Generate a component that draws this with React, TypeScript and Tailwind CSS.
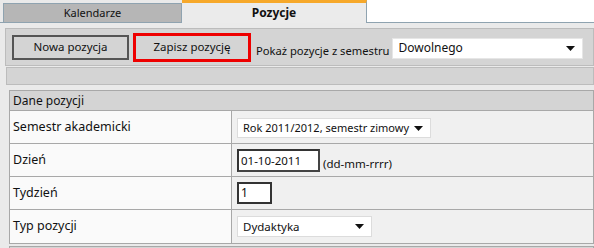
import React from "react";

function Caret() {
  return (
    <svg width="9" height="5" viewBox="0 0 9 5" className="shrink-0">
      <path d="M0 0h9L4.5 5z" fill="#111" />
    </svg>
  );
}

function Select({ value, className }: { value: string; className: string }) {
  return (
    <div
      className={`flex items-center justify-between whitespace-nowrap bg-white border border-[#dcdcdc] pl-[5px] pr-[7px] text-[#111] ${className}`}
    >
      <span>{value}</span>
      <Caret />
    </div>
  );
}

export default function App() {
  const rows = [
    {
      label: "Semestr akademicki",
      value: <Select value="Rok 2011/2012, semestr zimowy" className="w-[194px] h-[20px] mt-[2px] text-[11px]" />,
    },
    {
      label: "Dzień",
      value: (
        <div className="flex items-end gap-[3px] whitespace-nowrap">
          <div className="w-[83px] h-[23px] bg-white border-2 border-t-[#333] border-l-[#333] border-r-[#444] border-b-[#444] px-[2px] leading-[19px] text-[11.5px]">
            01-10-2011
          </div>
          <span className="text-[11.5px] leading-[14px] mb-[1px]">(dd-mm-rrrr)</span>
        </div>
      ),
    },
    {
      label: "Tydzień",
      value: (
        <div className="w-[35px] h-[22px] bg-white border-2 border-[#333] px-[2px] leading-[18px] text-[12px]">1</div>
      ),
    },
    {
      label: "Typ pozycji",
      value: <Select value="Dydaktyka" className="w-[135px] h-[21px] text-[11.5px]" />,
    },
  ];

  return (
    <div
      className="w-[594px] h-[248px] overflow-hidden bg-[#eaeaea] text-[#111] whitespace-nowrap"
      style={{ fontFamily: '"Noto Sans", "Open Sans", sans-serif' }}
    >
      {/* tabs */}
      <div className="flex h-[23px]">
        <div className="w-[3px] border-b border-[#8fa3b0]" />
        <div className="w-[179px] mt-[3px] bg-[#b6b6b6] border border-[#8fa3b0] flex items-center justify-center text-[11px]">
          Kalendarze
        </div>
        <div className="w-[185px] bg-[#ebebeb] border-t-[3px] border-t-[#f6a82a] border-r border-r-[#8fa3b0] flex items-center justify-center text-[12px] font-bold">
          Pozycje
        </div>
        <div className="flex-1 bg-white border-b border-[#8fa3b0]" />
      </div>

      {/* toolbar */}
      <div className="ml-[5px] mt-[5px] h-[38px] bg-[#d4d4d4] border border-[#bcbcbc] flex items-center pl-[6px] pr-[10px]">
        <div className="w-[117px] h-[25px] shrink-0 bg-[#d4d4d4] border-2 border-[#555] flex items-center justify-center text-[11.5px]">
          Nowa pozycja
        </div>
        <div className="ml-[4px] w-[118px] h-[29px] shrink-0 bg-[#d4d4d4] border-[3px] border-[#ee0000] flex items-center justify-center text-[11.5px]">
          Zapisz pozycję
        </div>
        <span className="ml-[5px] mt-[9px] text-[11.2px]">Pokaż pozycje z semestru</span>
        <Select value="Dowolnego" className="ml-[3px] w-[193px] h-[21px] mt-[2px] border-[#e6e6e6] text-[12px]" />
      </div>

      <div className="ml-[6px] mt-[1px] h-[18px] bg-[#d4d4d4] border border-[#bcbcbc]" />

      {/* form */}
      <div className="ml-[9px] mt-[5px] border border-[#a8a8a8]">
        <div className="h-[20px] bg-[#d4d4d4] border-b border-[#a8a8a8] flex items-center pl-[3px] text-[12px]">
          Dane pozycji
        </div>
        {rows.map((r, i) => (
          <div
            key={r.label}
            className={`flex h-[33px] ${i < rows.length - 1 ? "border-b border-[#a8a8a8]" : ""}`}
          >
            <div className="w-[222px] bg-[#fafafa] border-r border-[#a8a8a8] flex items-center pl-[3px] text-[12.5px]">
              {r.label}
            </div>
            <div className="flex-1 bg-[#f0f0f0] flex items-center pl-[5px]">{r.value}</div>
          </div>
        ))}
      </div>
      <div className="ml-[9px] mt-[2px] h-[8px] bg-[#d4d4d4] border border-[#a8a8a8]" />
    </div>
  );
}
